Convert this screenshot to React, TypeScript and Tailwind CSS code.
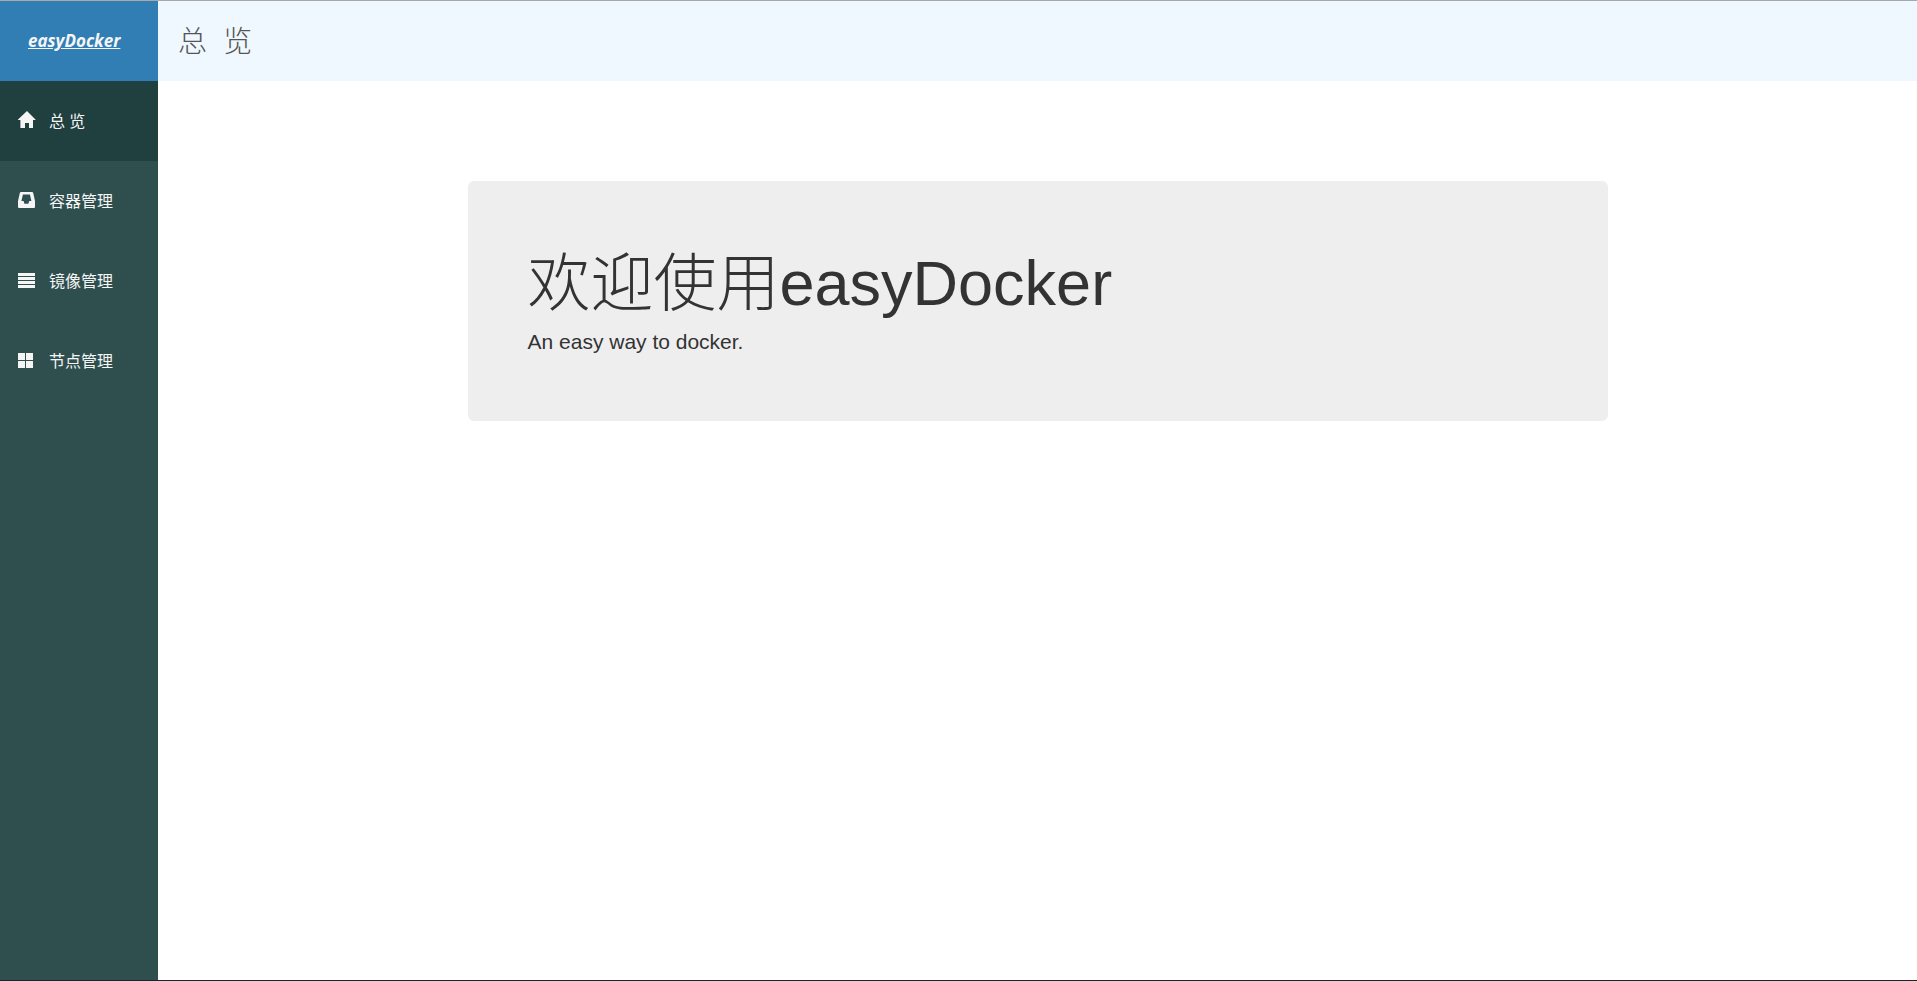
import type { ReactNode } from "react";

const navItems: { label: string; icon: ReactNode; active?: boolean }[] = [
  {
    label: "总 览",
    active: true,
    icon: <path d="M9 -1 L17.5 7.6 V8 H15 V16 H11 V11 H7 V16 H2.4 V8 H0 V7.6 Z" />,
  },
  {
    label: "容器管理",
    icon: (
      <path
        fillRule="evenodd"
        d="M3 0 H14 Q15 0 15.2 1 L17 9 V15 Q17 16 16 16 H1 Q0 16 0 15 V9 L1.8 1 Q2 0 3 0 Z M4.9 2.6 L3.4 9 H5.6 L6.4 11.8 H10.4 L11.2 9 H13.4 L11.9 2.6 Z"
      />
    ),
  },
  {
    label: "镜像管理",
    icon: <path d="M0 1h17v3H0z M0 5h17v3H0z M0 9h17v3H0z M0 13h17v3H0z" />,
  },
  {
    label: "节点管理",
    icon: <path d="M0 1h7v7H0z M8 1h7v7H8z M0 9h7v7H0z M8 9h7v7H8z" />,
  },
];

export default function App() {
  return (
    <div className="flex min-h-screen border-t border-b border-t-[#a9a9a9] border-b-[#1c232b] bg-white font-['Liberation_Sans','Noto_Sans_CJK_SC',sans-serif] text-[#333333]">
      <aside className="w-[158px] shrink-0 bg-[#2f4f4f] font-['Open_Sans','Noto_Sans_CJK_SC',sans-serif] text-base text-[#f5f5f5]">
        <a
          href="#"
          className="flex h-20 items-center bg-[#317eb5] px-7 text-[17px] font-bold italic underline"
        >
          easyDocker
        </a>
        <nav>
          {navItems.map((item) => (
            <a
              key={item.label}
              href="#"
              className={`flex h-20 items-center gap-[13px] pl-[18px] ${item.active ? "bg-[#203f3f]" : ""}`}
            >
              <svg
                viewBox="0 0 18 18"
                className="h-[18px] w-[18px] shrink-0 overflow-visible fill-[#f5f5f5]"
                aria-hidden="true"
              >
                {item.icon}
              </svg>
              {item.label}
            </a>
          ))}
        </nav>
      </aside>
      <div className="min-w-0 flex-1">
        <header className="flex h-20 items-center bg-[#f0f8ff] px-5 pt-0.5">
          <h2 className="text-[29px] leading-8 font-light text-[#555555]">总{"\u00a0\u00a0"}览</h2>
        </header>
        <main className="px-4 pt-[100px]">
          <section className="mx-auto max-w-[1140px] rounded-md bg-[#eeeeee] px-[60px] pt-[68px] pb-[64px]">
            <h1 className="text-[63px] leading-[68px] font-light">欢迎使用easyDocker</h1>
            <p className="mt-[10px] text-[21px] leading-[30px]">An easy way to docker.</p>
          </section>
        </main>
      </div>
    </div>
  );
}
